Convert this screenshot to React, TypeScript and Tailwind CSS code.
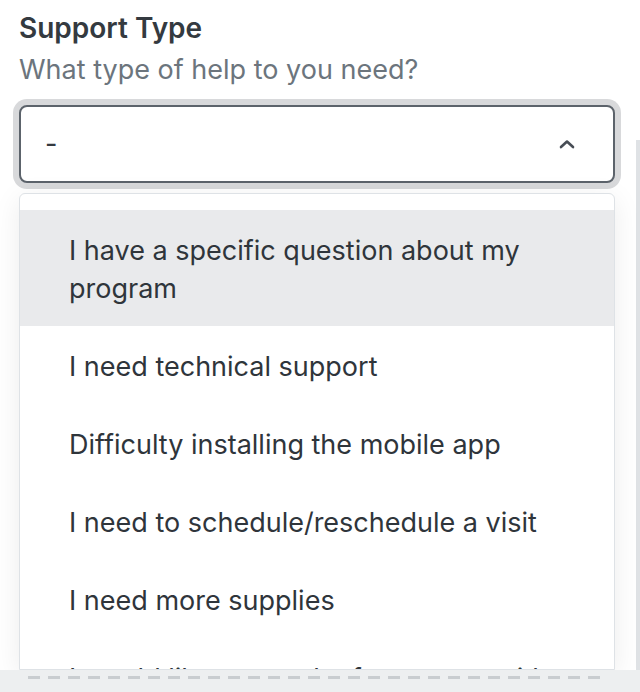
const options = [
  'I have a specific question about my program',
  'I need technical support',
  'Difficulty installing the mobile app',
  'I need to schedule/reschedule a visit',
  'I need more supplies',
  'I would like to speak of someone with my results',
]

function ChevronUp() {
  return (
    <svg width="16" height="10" viewBox="0 0 16 10" fill="none" aria-hidden="true">
      <polyline
        points="2,8 8,2.5 14,8"
        stroke="#474d55"
        strokeWidth="2.6"
        strokeLinecap="round"
        strokeLinejoin="round"
      />
    </svg>
  )
}

export default function App() {
  return (
    <div className="relative h-[692px] w-[640px] overflow-hidden bg-white font-['Inter','Liberation_Sans',sans-serif] antialiased">
      <div className="absolute right-0 top-[140px] h-[542px] w-[4px] bg-[#dfe2e5]" />

      <div className="relative flex flex-col pl-[19px] pr-[25px] pt-[11px]">
        <h2 className="text-[28px] font-semibold leading-[34px] text-[#343a40]">Support Type</h2>
        <p className="mt-[8px] text-[27px] leading-[34px] text-[#6c757d]">What type of help to you need?</p>

        <div className="mt-[18px] flex h-[78px] items-center justify-between rounded-[8px] border-2 border-[#5c636b] bg-white pl-[24px] pr-[38px] ring-[6px] ring-[#d8d9db]">
          <span className="text-[27px] leading-[32px] text-[#343a40]">-</span>
          <ChevronUp />
        </div>

        <div className="mt-[10px] h-[477px] overflow-hidden rounded-t-[6px] border border-[#dee2e6] bg-white pt-[16px] shadow-[0_6px_28px_rgba(0,0,0,0.08)]">
          {options.map((label, i) => (
            <div
              key={label}
              className={`pb-[18px] pl-[49px] pr-[60px] pt-[22px] text-[27px] leading-[38px] text-[#2f353b] ${
                i === 0 ? 'bg-[#e9eaec]' : ''
              }`}
            >
              {label}
            </div>
          ))}
        </div>
      </div>

      <div className="absolute bottom-0 left-0 right-0 h-[22px] bg-[#edeff0]">
        <div className="ml-[28px] mt-[6px] h-[3px] w-[576px] bg-[repeating-linear-gradient(90deg,#c9cdd0_0_12px,transparent_12px_20px)]" />
      </div>
    </div>
  )
}
